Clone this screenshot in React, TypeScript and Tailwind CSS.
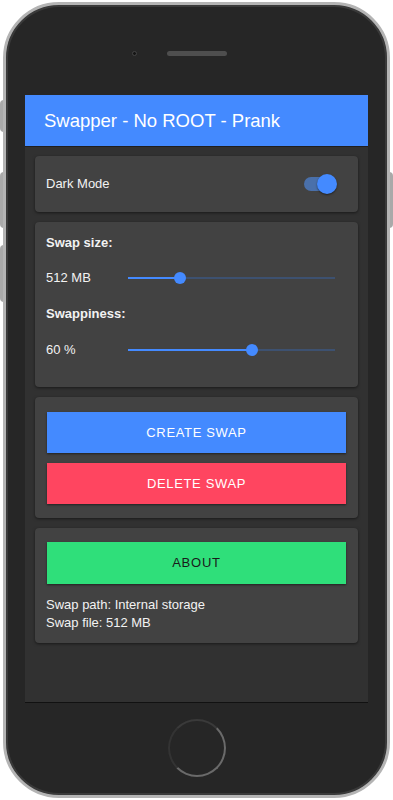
import React, { useState } from "react";

function Slider({ value }: { value: number }) {
  return (
    <div className="relative h-[20px] w-[207px] flex items-center">
      <div className="h-[2px] w-full bg-[#3d5170]" />
      <div className="absolute left-0 h-[2px] bg-[#448aff]" style={{ width: `${value * 100}%` }} />
      <div
        className="absolute h-[12px] w-[12px] -ml-[6px] rounded-full bg-[#448aff]"
        style={{ left: `${value * 100}%` }}
      />
    </div>
  );
}

export default function App() {
  const [dark, setDark] = useState(true);

  return (
    <div className="relative w-[393px] h-[800px] bg-white font-['Liberation_Sans',Arial,sans-serif]">
      {/* side buttons */}
      <div className="absolute left-0 top-[100px] h-[32px] w-[4px] rounded-l-sm bg-[#a9a9a9]" />
      <div className="absolute left-0 top-[172px] h-[56px] w-[4px] rounded-l-sm bg-[#a9a9a9]" />
      <div className="absolute left-0 top-[245px] h-[57px] w-[4px] rounded-l-sm bg-[#a9a9a9]" />
      <div className="absolute right-0 top-[172px] h-[56px] w-[4px] rounded-r-sm bg-[#a9a9a9]" />

      <div className="absolute left-[3px] top-[2px] w-[387px] h-[796px] rounded-[56px] border-[3px] border-[#b4b4b4] bg-[#262626] shadow-[inset_0_0_0_2px_#3a3a3a] flex flex-col items-center">
        {/* top: camera and speaker */}
        <div className="flex items-center w-full h-[90px] pt-[6px] pl-[126px] gap-[30px]">
          <div className="h-[5px] w-[5px] rounded-full bg-[#141414] border border-[#444]" />
          <div className="h-[5px] w-[60px] rounded-full bg-[#4e4e4e]" />
        </div>

        {/* screen */}
        <div className="w-[343px] h-[608px] bg-[#313131] border-b border-[#111] flex flex-col">
          <div className="h-[52px] bg-[#448aff] flex items-center px-[19px] border-b border-[#1f1f1f]">
            <span className="text-white text-[18.5px]">Swapper - No ROOT - Prank</span>
          </div>

          <div className="flex flex-col gap-[10px] px-[10px] pt-[9px]">
            <div className="h-[56px] rounded-[4px] bg-[#424242] shadow-[0_1px_3px_rgba(0,0,0,0.5)] flex items-center justify-between pl-[11px] pr-[21px]">
              <span className="text-[#f2f2f2] text-[13px]">Dark Mode</span>
              <button
                onClick={() => setDark(!dark)}
                className="relative w-[34px] h-[20px] flex items-center"
              >
                <div className="absolute left-[1px] w-[30px] h-[14px] rounded-full bg-[#4a70aa]" />
                <div className="absolute right-[0px] w-[20px] h-[20px] rounded-full bg-[#448aff] shadow-[0_1px_2px_rgba(0,0,0,0.5)]" />
              </button>
            </div>

            <div className="h-[165px] rounded-[4px] bg-[#424242] shadow-[0_1px_3px_rgba(0,0,0,0.5)] px-[11px] pt-[14px] text-[#f2f2f2] text-[13px]">
              <div className="font-bold h-[14px] leading-[14px]">Swap size:</div>
              <div className="flex items-center mt-[13px] h-[30px]">
                <span className="w-[82px]">512 MB</span>
                <Slider value={0.25} />
              </div>
              <div className="font-bold h-[14px] leading-[14px] mt-[14px]">Swappiness:</div>
              <div className="flex items-center mt-[14px] h-[30px]">
                <span className="w-[82px]">60 %</span>
                <Slider value={0.6} />
              </div>
            </div>

            <div className="h-[121px] rounded-[4px] bg-[#424242] shadow-[0_1px_3px_rgba(0,0,0,0.5)] px-[12px] pt-[15px] flex flex-col gap-[10px]">
              <button className="h-[41px] w-full bg-[#448aff] text-white text-[13px] tracking-[0.05em] shadow-[0_1px_2px_rgba(0,0,0,0.5)]">
                CREATE SWAP
              </button>
              <button className="h-[41px] w-full bg-[#ff4560] text-white text-[13px] tracking-[0.05em] shadow-[0_1px_2px_rgba(0,0,0,0.5)]">
                DELETE SWAP
              </button>
            </div>

            <div className="h-[115px] rounded-[4px] bg-[#424242] shadow-[0_1px_3px_rgba(0,0,0,0.5)] px-[12px] pt-[14px] flex flex-col">
              <button className="h-[42px] w-full bg-[#2fdf7a] text-[#1a1a1a] text-[13px] tracking-[0.06em] shadow-[0_1px_2px_rgba(0,0,0,0.5)]">
                ABOUT
              </button>
              <div className="mt-[12px] text-[#f2f2f2] text-[13px] leading-[18px] -ml-[1px]">
                <div>Swap path: Internal storage</div>
                <div>Swap file: 512 MB</div>
              </div>
            </div>
          </div>
        </div>

        {/* home button */}
        <div className="flex-1 flex items-center justify-center -mt-[2px]">
          <div className="w-[58px] h-[58px] rounded-full border-[2px] border-[#6a6a6a] border-t-[#3a3a3a] border-l-[#333]" />
        </div>
      </div>
    </div>
  );
}
